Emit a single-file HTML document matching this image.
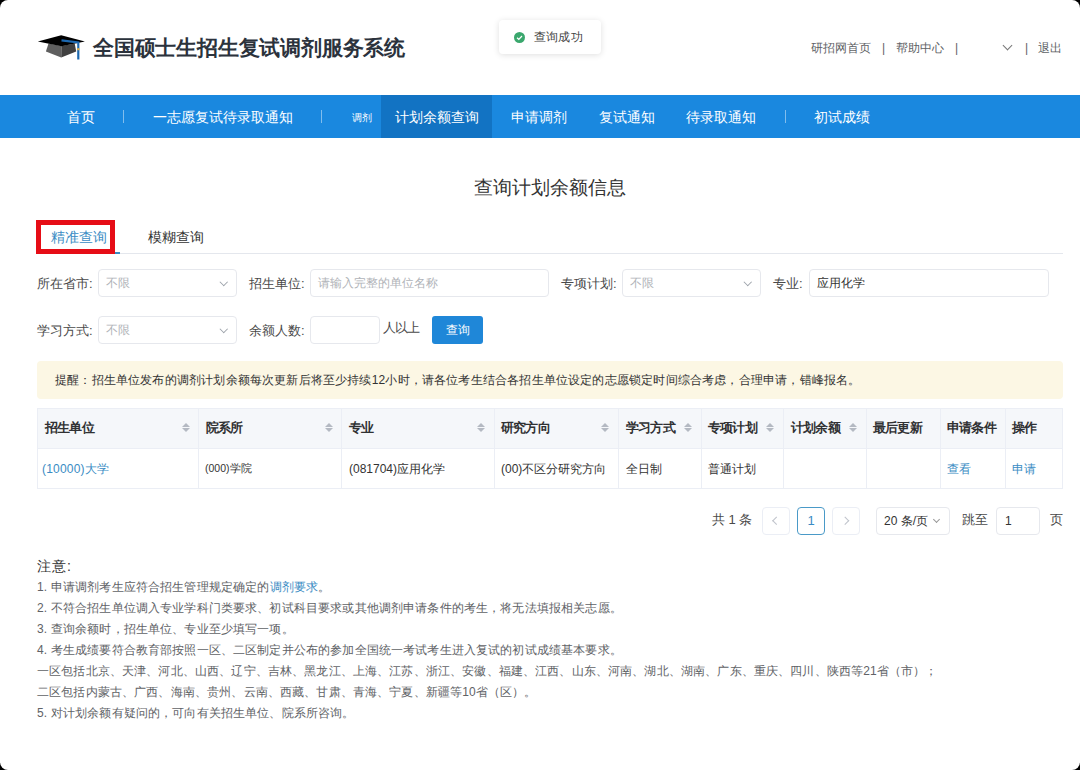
<!DOCTYPE html>
<html><head><meta charset="utf-8">
<style>
*{box-sizing:border-box;margin:0;padding:0}
html,body{width:1080px;height:770px;overflow:hidden;background:#000}
body{font-family:"Liberation Sans",sans-serif;color:#333;position:relative}
#page{position:absolute;left:0;top:0;width:1080px;height:770px;background:#fff;border-radius:8px;overflow:hidden}
.abs{position:absolute;white-space:nowrap}
#title{left:93px;top:35px;font-size:21px;font-weight:bold;color:#2b323c;line-height:26px;letter-spacing:-0.2px}
#toast{position:absolute;left:499px;top:20px;width:102px;height:34px;background:#fff;border-radius:4px;box-shadow:0 1px 6px rgba(0,0,0,.13)}
#toast .ic{position:absolute;left:15px;top:12px;width:11px;height:11px;border-radius:50%;background:#3aa76d}
#toast .tx{position:absolute;left:35px;top:10px;font-size:12px;line-height:15px;color:#444;letter-spacing:0.2px}
.tl{position:absolute;top:41px;font-size:12px;color:#606266;line-height:14px;white-space:nowrap}
#nav{left:0;top:95px;width:1080px;height:43px;background:#1a88df}
#nav .it{position:absolute;top:1px;height:43px;line-height:43px;color:#fff;font-size:14px;white-space:nowrap}
#nav .sep{position:absolute;top:15px;width:1px;height:13px;background:rgba(255,255,255,.45)}
#nav .act{position:absolute;left:381px;top:0;width:111px;height:43px;background:#1273c3}
#h2{left:0;width:1100px;text-align:center;top:176px;font-size:19px;color:#333;line-height:24px}
.tab{top:228px;font-size:14px;line-height:18px}
.lbl{position:absolute;font-size:13px;color:#4a4a4a;line-height:16px;white-space:nowrap}
.box{position:absolute;border:1px solid #e6e8ed;border-radius:4px;background:#fff}
.ph{position:absolute;font-size:12px;color:#b0b3b8;line-height:15px;white-space:nowrap}
.arr{position:absolute;width:5.5px;height:5.5px;border-right:1px solid #9aa0a8;border-bottom:1px solid #9aa0a8;transform:rotate(45deg)}
#alert{position:absolute;left:37px;top:361px;width:1026px;height:38px;background:#fcf7e4;border-radius:4px}
#alert .tx{position:absolute;left:18px;top:12px;font-size:12px;line-height:15px;color:#333;white-space:nowrap;letter-spacing:0.18px}
.tbl{position:absolute;left:37px;top:408px;width:1026px;height:81px;border:1px solid #ebeef5;background:#fff}
.thbg{position:absolute;left:0;top:0;width:1024px;height:40px;background:#f5f7fa;border-bottom:1px solid #ebeef5}
.vl{position:absolute;top:0;width:1px;height:79px;background:#ebeef5}
.th{position:absolute;top:11px;font-size:13px;font-weight:bold;color:#303133;line-height:16px;white-space:nowrap;letter-spacing:-0.8px}
.td{position:absolute;top:52px;font-size:12px;color:#333;line-height:16px;white-space:nowrap}
.sort{position:absolute;top:14px;margin-left:-1px;width:8px;height:10px}
.sort:before{content:"";position:absolute;left:0;top:0;border-left:4px solid transparent;border-right:4px solid transparent;border-bottom:4px solid #b4b9c2}
.sort:after{content:"";position:absolute;left:0;top:5px;border-left:4px solid transparent;border-right:4px solid transparent;border-top:4px solid #b4b9c2}
.notes{position:absolute;left:37px;font-size:12px;color:#606266;line-height:16px;white-space:nowrap;letter-spacing:0.15px}
.lk{color:#3a8cc4}
</style></head>
<body>
<div id="page">
  <!-- logo -->
  <svg class="abs" style="left:35px;top:30px" width="55" height="35" viewBox="0 0 55 35">
    <polygon points="13.5,13.5 26.5,16 26.2,27.5 10.9,21.4" fill="#5f5f5f"/>
    <polygon points="26.5,16 39.7,13.5 41.2,21.6 26.2,27.5" fill="#404040"/>
    <polygon points="2.8,11.5 26.2,5.3 49.9,11.5 26.5,16.3" fill="#000"/>
    <polyline points="26.5,10.4 43.3,12.4 43.3,29.5" fill="none" stroke="#1c68b0" stroke-width="2.2"/>
    <rect x="42.2" y="18.2" width="2.2" height="2" fill="#e0b040"/>
  </svg>
  <div id="title" class="abs">全国硕士生招生复试调剂服务系统</div>
  <div id="toast"><div class="ic"><svg width="11" height="11" viewBox="0 0 11 11" style="position:absolute;left:0;top:0"><polyline points="3,5.7 4.8,7.3 8,4" fill="none" stroke="#fff" stroke-width="1.2"/></svg></div><div class="tx">查询成功</div></div>
  <div class="tl" style="left:811px">研招网首页</div>
  <div class="tl" style="left:882px">|</div>
  <div class="tl" style="left:896px">帮助中心</div>
  <div class="tl" style="left:955px">|</div>
  <div class="abs" style="left:1004px;top:42px;width:7px;height:7px;border-right:1px solid #777;border-bottom:1px solid #777;transform:rotate(45deg)"></div>
  <div class="tl" style="left:1025px">|</div>
  <div class="tl" style="left:1038px">退出</div>

  <div id="nav" class="abs">
    <div class="act"></div>
    <div class="it" style="left:67px">首页</div>
    <div class="sep" style="left:123px"></div>
    <div class="it" style="left:153px">一志愿复试待录取通知</div>
    <div class="sep" style="left:321px"></div>
    <div class="it" style="left:352px;font-size:10px">调剂</div>
    <div class="it" style="left:395px">计划余额查询</div>
    <div class="it" style="left:511px">申请调剂</div>
    <div class="it" style="left:599px">复试通知</div>
    <div class="it" style="left:686px">待录取通知</div>
    <div class="sep" style="left:785px"></div>
    <div class="it" style="left:814px">初试成绩</div>
  </div>

  <div id="h2" class="abs">查询计划余额信息</div>

  <!-- tabs -->
  <div class="abs" style="left:37px;top:253px;width:1026px;height:1px;background:#e4e7ed"></div>
  <div class="abs" style="left:37px;top:252px;width:83px;height:2px;background:#3a8cc4"></div>
  <div class="abs tab" style="left:51px;color:#3a8cc4">精准查询</div>
  <div class="abs tab" style="left:148px;color:#333">模糊查询</div>
  <div class="abs" style="left:36px;top:220px;width:79px;height:34px;border:5px solid #e60d16"></div>

  <!-- form row 1 -->
  <div class="lbl" style="left:37px;top:276px">所在省市:</div>
  <div class="box" style="left:98px;top:269px;width:139px;height:28px"><div class="ph" style="left:7px;top:6px">不限</div><div class="arr" style="left:121.5px;top:9px"></div></div>
  <div class="lbl" style="left:249px;top:276px">招生单位:</div>
  <div class="box" style="left:310px;top:269px;width:239px;height:28px"><div class="ph" style="left:7px;top:6px">请输入完整的单位名称</div></div>
  <div class="lbl" style="left:561px;top:276px">专项计划:</div>
  <div class="box" style="left:622px;top:269px;width:139px;height:28px"><div class="ph" style="left:7px;top:6px">不限</div><div class="arr" style="left:121.5px;top:9px"></div></div>
  <div class="lbl" style="left:773px;top:276px">专业:</div>
  <div class="box" style="left:809px;top:269px;width:240px;height:28px"><div class="ph" style="left:7px;top:6px;color:#333;font-size:12px">应用化学</div></div>

  <!-- form row 2 -->
  <div class="lbl" style="left:37px;top:323px">学习方式:</div>
  <div class="box" style="left:98px;top:316px;width:139px;height:28px"><div class="ph" style="left:7px;top:6px">不限</div><div class="arr" style="left:121.5px;top:9px"></div></div>
  <div class="lbl" style="left:249px;top:323px">余额人数:</div>
  <div class="box" style="left:310px;top:316px;width:70px;height:28px"></div>
  <div class="lbl" style="left:383px;top:320px;letter-spacing:-0.8px">人以上</div>
  <div class="abs" style="left:432px;top:316px;width:51px;height:28px;background:#1f87d8;border-radius:3px;color:#fff;font-size:12px;line-height:28px;text-align:center">查询</div>

  <div id="alert"><div class="tx">提醒：招生单位发布的调剂计划余额每次更新后将至少持续12小时，请各位考生结合各招生单位设定的志愿锁定时间综合考虑，合理申请，错峰报名。</div></div>

  <!-- table -->
  <div class="tbl">
    <div class="thbg"></div>
    <div class="vl" style="left:160px"></div>
    <div class="vl" style="left:303px"></div>
    <div class="vl" style="left:456px"></div>
    <div class="vl" style="left:580px"></div>
    <div class="vl" style="left:663px"></div>
    <div class="vl" style="left:745px"></div>
    <div class="vl" style="left:828px"></div>
    <div class="vl" style="left:902px"></div>
    <div class="vl" style="left:967px"></div>
    <div class="th" style="left:7px">招生单位</div><div class="sort" style="left:145px"></div>
    <div class="th" style="left:168px">院系所</div><div class="sort" style="left:288px"></div>
    <div class="th" style="left:311px">专业</div><div class="sort" style="left:440px"></div>
    <div class="th" style="left:463px">研究方向</div><div class="sort" style="left:564px"></div>
    <div class="th" style="left:588px">学习方式</div><div class="sort" style="left:647px"></div>
    <div class="th" style="left:670px">专项计划</div><div class="sort" style="left:729px"></div>
    <div class="th" style="left:753px">计划余额</div><div class="sort" style="left:812px"></div>
    <div class="th" style="left:835px">最后更新</div>
    <div class="th" style="left:909px">申请条件</div>
    <div class="th" style="left:974px">操作</div>
    <div class="td lk" style="left:4px;letter-spacing:0.2px">(10000)大学</div>
    <div class="td" style="left:167px;font-size:10.5px;top:51px">(000)学院</div>
    <div class="td" style="left:311px">(081704)应用化学</div>
    <div class="td" style="left:463px">(00)不区分研究方向</div>
    <div class="td" style="left:588px">全日制</div>
    <div class="td" style="left:670px">普通计划</div>
    <div class="td lk" style="left:909px">查看</div>
    <div class="td lk" style="left:974px">申请</div>
  </div>

  <!-- pagination -->
  <div class="lbl" style="left:712px;top:512px">共 1 条</div>
  <div class="box" style="left:762px;top:507px;width:28px;height:28px;border-color:#ebeef5"><div class="arr" style="left:11px;top:10px;transform:rotate(135deg);border-color:#c0c4cc"></div></div>
  <div class="box" style="left:797px;top:507px;width:28px;height:28px;border-color:#4a9ac8;color:#3a8cc4;font-size:13px;text-align:center;line-height:26px">1</div>
  <div class="box" style="left:832px;top:507px;width:28px;height:28px;border-color:#ebeef5"><div class="arr" style="left:9px;top:10px;transform:rotate(-45deg);border-color:#c0c4cc"></div></div>
  <div class="box" style="left:876px;top:507px;width:74px;height:28px"><div class="ph" style="left:7px;top:6px;color:#333">20 条/页</div><div class="arr" style="left:57px;top:9px;width:5px;height:5px;border-color:#999"></div></div>
  <div class="lbl" style="left:962px;top:512px">跳至</div>
  <div class="box" style="left:996px;top:507px;width:44px;height:28px"><div class="ph" style="left:8px;top:6px;color:#333">1</div></div>
  <div class="lbl" style="left:1050px;top:512px">页</div>

  <!-- notes -->
  <div class="abs" style="left:37px;top:557px;font-size:14px;color:#333;line-height:18px;letter-spacing:1px">注意:</div>
  <div class="notes" style="top:579px">1. 申请调剂考生应符合招生管理规定确定的<span class="lk">调剂要求</span>。</div>
  <div class="notes" style="top:600px">2. 不符合招生单位调入专业学科门类要求、初试科目要求或其他调剂申请条件的考生，将无法填报相关志愿。</div>
  <div class="notes" style="top:621px">3. 查询余额时，招生单位、专业至少填写一项。</div>
  <div class="notes" style="top:642px">4. 考生成绩要符合教育部按照一区、二区制定并公布的参加全国统一考试考生进入复试的初试成绩基本要求。</div>
  <div class="notes" style="top:663px">一区包括北京、天津、河北、山西、辽宁、吉林、黑龙江、上海、江苏、浙江、安徽、福建、江西、山东、河南、湖北、湖南、广东、重庆、四川、陕西等21省（市）；</div>
  <div class="notes" style="top:684px">二区包括内蒙古、广西、海南、贵州、云南、西藏、甘肃、青海、宁夏、新疆等10省（区）。</div>
  <div class="notes" style="top:705px">5. 对计划余额有疑问的，可向有关招生单位、院系所咨询。</div>
</div>
</body></html>
